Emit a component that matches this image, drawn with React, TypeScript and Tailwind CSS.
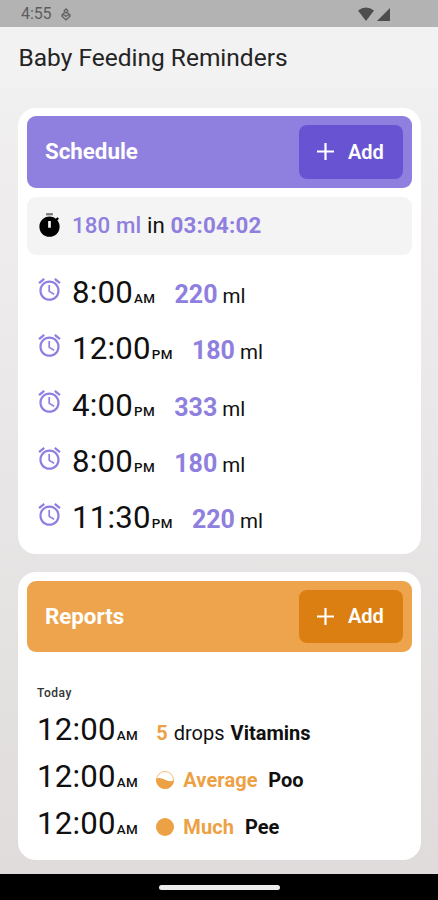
import React from "react";

type Feed = { time: string; period: string; amount: string };

const feeds: Feed[] = [
  { time: "8:00", period: "AM", amount: "220" },
  { time: "12:00", period: "PM", amount: "180" },
  { time: "4:00", period: "PM", amount: "333" },
  { time: "8:00", period: "PM", amount: "180" },
  { time: "11:30", period: "PM", amount: "220" },
];

function AlarmIcon() {
  return (
    <svg width="27" height="27" viewBox="0 0 24 24" fill="#8f7fe0" className="-mt-[8px] shrink-0">
      <path d="M12.5 8H11v6l4.75 2.85.75-1.23-4-2.37zm4.837-6.19 4.607 3.845-1.28 1.535-4.61-3.843zm-10.674 0 1.282 1.536L3.337 7.19l-1.28-1.536zM12 4c-4.97 0-9 4.03-9 9s4.03 9 9 9 9-4.03 9-9-4.03-9-9-9m0 16c-3.86 0-7-3.14-7-7s3.14-7 7-7 7 3.14 7 7-3.14 7-7 7" />
    </svg>
  );
}

function TimerIcon() {
  return (
    <svg width="27" height="27" viewBox="0 0 24 24" className="-mt-px shrink-0">
      <path fill="#777" d="M9 1h6v2H9z" />
      <path d="M19.03 7.39l1.42-1.42c-.43-.51-.9-.99-1.41-1.41l-1.42 1.42C16.07 4.74 14.12 4 12 4c-4.97 0-9 4.03-9 9s4.02 9 9 9 9-4.03 9-9c0-2.12-.74-4.07-1.97-5.61zM13.2 14h-2.4V8h2.4z" />
    </svg>
  );
}

function AddButton({ color }: { color: string }) {
  return (
    <button className={`flex h-[53.5px] w-[103.5px] items-center rounded-[8px] pl-[18px] text-[20px] font-semibold text-white ${color}`}>
      <svg width="17" height="17" viewBox="0 0 17 17" stroke="white" strokeWidth="2.2" className="mr-[14px]">
        <path d="M0 8.5h17M8.5 0v17" />
      </svg>
      Add
    </button>
  );
}

function CardHeader({ title, color, button }: { title: string; color: string; button: string }) {
  return (
    <div className={`flex h-[71.5px] shrink-0 items-center justify-between rounded-[9px] pl-[18px] pr-[9px] ${color}`}>
      <h2 className="text-[22.3px] font-bold text-white">{title}</h2>
      <AddButton color={button} />
    </div>
  );
}

function Time({ time, period }: { time: string; period: string }) {
  return (
    <span className="whitespace-nowrap">
      <span className="text-[31.2px] tracking-[0.2px]">{time}</span>
      <span className="ml-px text-[13.4px] font-medium tracking-[0.5px]">{period}</span>
    </span>
  );
}

function Level({ full }: { full?: boolean }) {
  return (
    <svg width="18" height="18" viewBox="0 0 18 18" className="mr-[9px] shrink-0 self-center">
      {full ? (
        <circle cx="9" cy="9" r="9" fill="#eda145" />
      ) : (
        <>
          <circle cx="9" cy="9" r="8.5" fill="white" stroke="#f1b56d" strokeWidth="0.9" />
          <path fill="#eda145" d="M.2 7.6C3 6.2 6 7 9 8.8c3 1.7 5.8 2 8.9.4A9 9 0 0 1 9 18 9 9 0 0 1 .2 7.6z" />
        </>
      )}
    </svg>
  );
}

export default function App() {
  return (
    <div className="flex h-[900px] w-[438px] flex-col overflow-hidden bg-linear-to-b from-[#f3f2f3] to-[#dfdbdb] font-[Roboto,sans-serif] text-[#101010]">
      <div className="flex h-[27px] shrink-0 items-center bg-[#b4b3b3] pl-[21px] text-[#5d5d5d]">
        <span className="mt-px text-[16px] tracking-[-0.1px]">4:55</span>
        <svg width="10" height="13" viewBox="0 0 10 13" className="ml-[10px] mt-px" fill="none" stroke="#5d5d5d" strokeWidth="1.2">
          <path d="M5 .8 3 3l2 2.2L7 3zM3.5 4.8 1 6.8v1.4L5 12l4-3.8V6.8L6.5 4.8M1 7h2.5L5 8.5 6.5 7H9" />
        </svg>
        <svg width="34" height="15" viewBox="0 0 34 15" className="ml-[287px] mt-px" fill="#4d4d4d">
          <path d="M0 3.5Q8-2.5 16 3.5L8 14z" />
          <path d="M32 1v13H19z" />
        </svg>
      </div>

      <header className="flex h-[62px] shrink-0 items-center bg-white/10 pl-[18.5px]">
        <h1 className="text-[24.5px] text-[#242424]">Baby Feeding Reminders</h1>
      </header>

      <main className="mt-[18.5px] flex flex-col gap-[18px] pl-[18px] pr-[17.5px]">
        <section className="flex h-[446px] flex-col rounded-[18px] bg-white px-[9px] pb-[9px] pt-[8.5px]">
          <CardHeader title="Schedule" color="bg-[#8f7fde]" button="bg-[#6854d3]" />
          <div className="mt-[9px] flex h-[58px] shrink-0 items-center rounded-[9px] bg-[#f4f4f4] pl-[9px] text-[22.3px]">
            <TimerIcon />
            <p className="ml-[9px] whitespace-nowrap tracking-[0.1px]">
              <span className="font-medium text-[#8f7fde]">180 ml</span> in{" "}
              <span className="font-bold tracking-[0.2px] text-[#8f7fde]">03:04:02</span>
            </p>
          </div>
          <ul className="mt-[11px]">
            {feeds.map((f) => (
              <li key={f.time + f.period} className="flex h-[56.2px] items-center pl-[9px]">
                <AlarmIcon />
                <div className="ml-[9px] flex items-baseline">
                  <Time time={f.time} period={f.period} />
                  <span className="ml-[19px] text-[25px] font-bold text-[#8f7fde]">{f.amount}</span>
                  <span className="ml-[5px] text-[20.5px]">ml</span>
                </div>
              </li>
            ))}
          </ul>
        </section>

        <section className="flex h-[288px] flex-col rounded-[18px] bg-white p-[9px]">
          <CardHeader title="Reports" color="bg-[#eda44c]" button="bg-[#db7f13]" />
          <h3 className="mt-[31.5px] pl-[10px] text-[12px] font-medium leading-[18px] tracking-[0.5px] text-[#333]">Today</h3>
          <ul className="mt-[5.5px] text-[20px]">
            <li className="flex h-[46.8px] items-center pl-[10px]">
              <div className="flex items-baseline">
                <Time time="12:00" period="AM" />
                <span className="ml-[18px] font-bold text-[#eda145]">5</span>
                <span className="ml-[6px]">drops</span>
                <span className="ml-[6px] font-bold">Vitamins</span>
              </div>
            </li>
            <li className="flex h-[46.8px] items-center pl-[10px]">
              <div className="flex items-baseline">
                <Time time="12:00" period="AM" />
                <span className="ml-[18px] flex items-baseline font-bold tracking-[0.1px] text-[#eda145]"><Level />Average</span>
                <span className="ml-[10.5px] font-bold">Poo</span>
              </div>
            </li>
            <li className="flex h-[46.8px] items-center pl-[10px]">
              <div className="flex items-baseline">
                <Time time="12:00" period="AM" />
                <span className="ml-[18px] flex items-baseline font-bold tracking-[0.1px] text-[#eda145]"><Level full />Much</span>
                <span className="ml-[11px] font-bold">Pee</span>
              </div>
            </li>
          </ul>
        </section>
      </main>

      <footer className="mt-auto flex h-[26px] shrink-0 items-center justify-center bg-black">
        <div className="h-[5px] w-[121px] rounded-full bg-[#ececec]" />
      </footer>
    </div>
  );
}
